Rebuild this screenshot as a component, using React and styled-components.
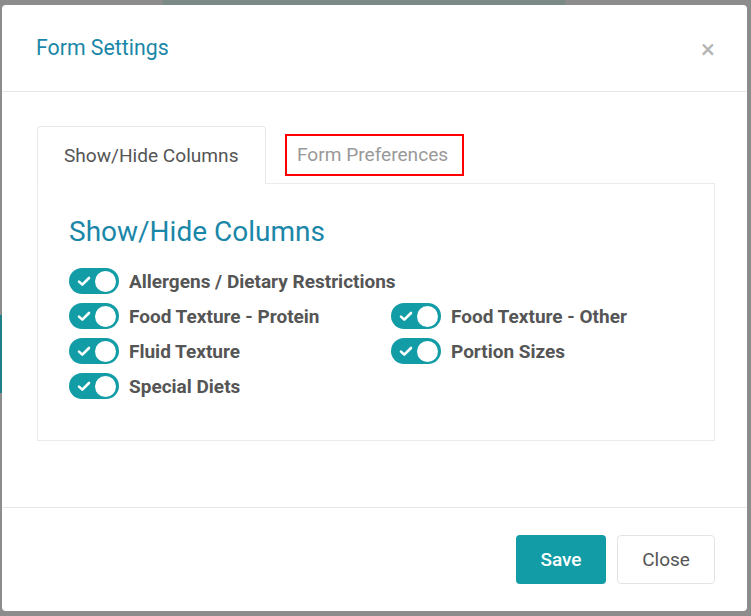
import styled, { createGlobalStyle } from "styled-components"

const GlobalStyle = createGlobalStyle`
  html, body {
    margin: 0;
    padding: 0;
    font-family: Roboto, "Liberation Sans", sans-serif;
  }
  * { box-sizing: border-box; }
`

const TEAL = "#129ca6"
const BLUE = "#1a87a8"

const columns = [
  ["Allergens / Dietary Restrictions", null],
  ["Food Texture - Protein", "Food Texture - Other"],
  ["Fluid Texture", "Portion Sizes"],
  ["Special Diets", null],
]

const Toggle = () => (
  <Switch>
    <svg width="14" height="11" viewBox="0 0 14 11">
      <path d="M2 5.6 L5.3 8.6 L12 2" fill="none" stroke="#fff" strokeWidth="2.6" strokeLinecap="round" strokeLinejoin="round" />
    </svg>
    <Knob />
  </Switch>
)

const Option = ({ label }) => (
  <OptionRow>
    <Toggle />
    <span>{label}</span>
  </OptionRow>
)

const App = () => {
  const cells = []
  columns.forEach(([a, b], i) => {
    cells.push(<Option key={`a${i}`} label={a} />)
    cells.push(b ? <Option key={`b${i}`} label={b} /> : <div key={`b${i}`} />)
  })
  return (
    <Backdrop>
      <GlobalStyle />
      <Modal>
        <Header>
          <h1>Form Settings</h1>
          <CloseX>×</CloseX>
        </Header>
        <Body>
          <Tabs>
            <Tab $active>Show/Hide Columns</Tab>
            <Tab $marked>Form Preferences</Tab>
          </Tabs>
          <Panel>
            <h2>Show/Hide Columns</h2>
            <OptionGrid>{cells}</OptionGrid>
          </Panel>
        </Body>
        <Footer>
          <Button $primary>Save</Button>
          <Button>Close</Button>
        </Footer>
      </Modal>
    </Backdrop>
  )
}

const Backdrop = styled.div`
  width: 751px;
  height: 616px;
  overflow: hidden;
  padding: 5px 0 0 2px;
  background:
    linear-gradient(#7b8a87, #7b8a87) 163px 0 / 402px 5px no-repeat,
    linear-gradient(#1f7f88, #1f7f88) 0 315px / 2px 78px no-repeat,
    #8c8c8c;
`

const Modal = styled.div`
  width: 745px;
  height: 606px;
  background: #fff;
  border-radius: 4px;
  display: flex;
  flex-direction: column;
`

const Header = styled.div`
  height: 87px;
  padding: 0 32px 2px 34px;
  display: flex;
  align-items: center;
  justify-content: space-between;
  border-bottom: 1px solid #e7e7e7;
  h1 {
    margin: 0;
    font-size: 21.3px;
    font-weight: 400;
    color: ${BLUE};
  }
`

const CloseX = styled.span`
  font-size: 26px;
  color: #b3b3b3;
  line-height: 1;
  margin-top: 4px;
`

const Body = styled.div`
  flex: 1;
  padding: 34px 32px 0 35px;
`

const Tabs = styled.div`
  display: flex;
  align-items: center;
  height: 57px;
`

const Tab = styled.div`
  font-size: 19.1px;
  display: flex;
  align-items: center;
  white-space: nowrap;
  ${({ $active }) =>
    $active
      ? `
    width: 229px;
    height: 58px;
    margin-bottom: -1px;
    padding: 0 0 0 26px;
    color: #555;
    background: #fff;
    border: 1px solid #e8e8e8;
    border-bottom: none;
    border-radius: 4px 4px 0 0;
    position: relative;
    z-index: 1;
  `
      : `
    color: #999;
    margin-left: 19px;
    height: 42px;
  `}
  ${({ $marked }) => $marked && `width: 179px; border: 2px solid #f00; padding: 0 0 0 10px;`}
`

const Panel = styled.div`
  border: 1px solid #ebebeb;
  height: 258px;
  padding: 32px 31px 0;
  h2 {
    margin: 0 0 20px;
    font-size: 28px;
    font-weight: 400;
    color: ${BLUE};
    line-height: 32px;
  }
`

const OptionGrid = styled.div`
  display: grid;
  grid-template-columns: 322px 1fr;
  row-gap: 9px;
`

const OptionRow = styled.div`
  display: flex;
  align-items: center;
  gap: 10px;
  font-size: 19px;
  font-weight: 700;
  color: #555;
  white-space: nowrap;
`

const Switch = styled.div`
  flex: none;
  width: 50px;
  height: 26px;
  border-radius: 13px;
  background: ${TEAL};
  display: flex;
  align-items: center;
  justify-content: space-between;
  padding: 0 3px 0 8px;
`

const Knob = styled.div`
  width: 21px;
  height: 21px;
  border-radius: 50%;
  background: #fff;
`

const Footer = styled.div`
  height: 104px;
  border-top: 1px solid #e7e7e7;
  display: flex;
  align-items: center;
  justify-content: flex-end;
  gap: 11px;
  padding: 0 32px 0 0;
`

const Button = styled.button`
  height: 49px;
  font-family: inherit;
  font-size: 19px;
  border-radius: 4px;
  cursor: pointer;
  ${({ $primary }) =>
    $primary
      ? `width: 90px; background: ${TEAL}; color: #fff; border: none; font-weight: 500;`
      : `width: 98px; background: #fff; color: #555; border: 1px solid #e3e3e3;`}
`

export default App
